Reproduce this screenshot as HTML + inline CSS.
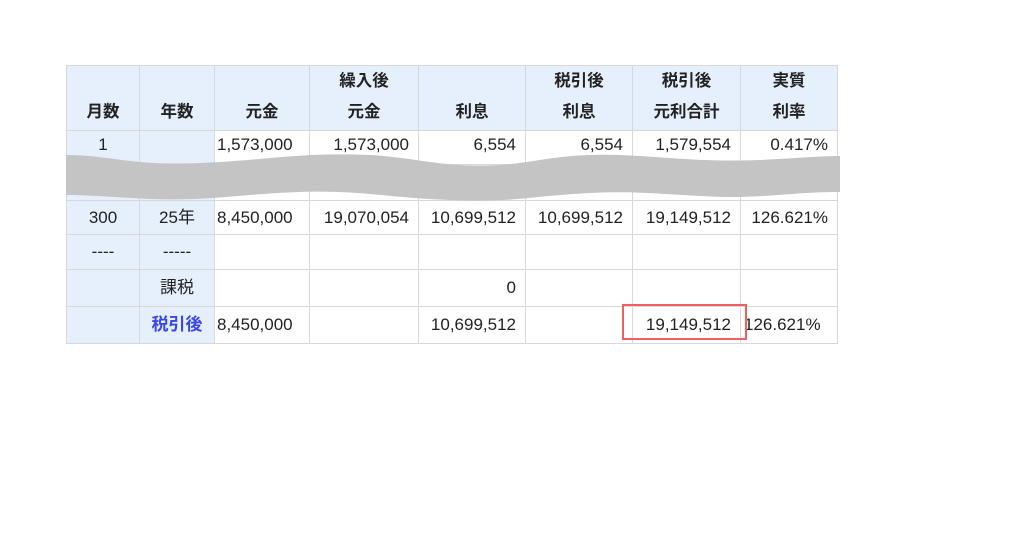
<!DOCTYPE html>
<html><head><meta charset="utf-8"><style>
body{margin:0;width:1024px;height:538px;background:#fff;position:relative;overflow:hidden;font-family:"Liberation Sans","Noto Sans CJK JP",sans-serif;font-size:17px;color:#222}
table{position:absolute;left:66px;top:65px;border-collapse:collapse;table-layout:fixed}
td{border:1px solid #d8d8d8;padding:0 9px 0 2px;height:34px;line-height:20px;white-space:nowrap;overflow:visible;box-sizing:border-box}
th{border:1px solid #d8d8d8;background:#e6f0fc;font-weight:bold;height:63px;padding:0 0 2px 0;line-height:31px;vertical-align:bottom;font-size:16.5px;box-sizing:border-box}
.b{background:#e6f0fc;text-align:center;padding:0}
.r{text-align:right}
.cj{font-size:17px}
.blue{color:#3845e8;font-weight:bold}
</style></head><body>
<table>
<colgroup><col style="width:73px"><col style="width:75px"><col style="width:95px"><col style="width:109px"><col style="width:107px"><col style="width:107px"><col style="width:108px"><col style="width:97px"></colgroup>
<tr><th>月数</th><th>年数</th><th>元金</th><th>繰入後<br>元金</th><th>利息</th><th>税引後<br>利息</th><th>税引後<br>元利合計</th><th>実質<br>利率</th></tr>
<tr><td class="b" style="height:34px;vertical-align:top;padding-top:4px">1</td><td class="b"></td><td style="vertical-align:top;padding-top:4px">1,573,000</td><td class="r" style="vertical-align:top;padding-top:4px">1,573,000</td><td class="r" style="vertical-align:top;padding-top:4px">6,554</td><td class="r" style="vertical-align:top;padding-top:4px">6,554</td><td class="r" style="vertical-align:top;padding-top:4px">1,579,554</td><td class="r" style="vertical-align:top;padding-top:4px">0.417%</td></tr>
<tr><td class="b" style="height:36px"></td><td class="b"></td><td></td><td></td><td></td><td></td><td></td><td></td></tr>
<tr><td class="b">300</td><td class="b cj">25年</td><td>8,450,000</td><td class="r">19,070,054</td><td class="r">10,699,512</td><td class="r">10,699,512</td><td class="r">19,149,512</td><td class="r">126.621%</td></tr>
<tr><td class="b" style="height:35px">----</td><td class="b">-----</td><td></td><td></td><td></td><td></td><td></td><td></td></tr>
<tr><td class="b" style="height:37px"></td><td class="b cj">課税</td><td></td><td></td><td class="r">0</td><td></td><td></td><td></td></tr>
<tr><td class="b" style="height:37px"></td><td class="b cj blue">税引後</td><td>8,450,000</td><td></td><td class="r">10,699,512</td><td></td><td class="r">19,149,512</td><td style="padding:0 0 0 3px">126.621%</td></tr>
</table>
<svg style="position:absolute;left:0;top:0" width="1024" height="538">
<path d="M66 155 C110 155 130 166 200 163 C270 160 300 152 370 155 C420 158 440 168 500 165 C540 162 560 153 620 155 C680 158 700 162 760 160 C800 158 820 156 840 156 L840 192 C800 192 780 196 740 197 C680 197 650 190 590 193 C530 196 510 203 450 200 C390 198 360 190 300 192 C240 194 210 201 150 199 C110 197 90 195 66 195 Z" fill="#c4c4c4"/>
<rect x="623" y="305" width="123" height="34" fill="none" stroke="#f06060" stroke-width="2"/>
</svg>
</body></html>
